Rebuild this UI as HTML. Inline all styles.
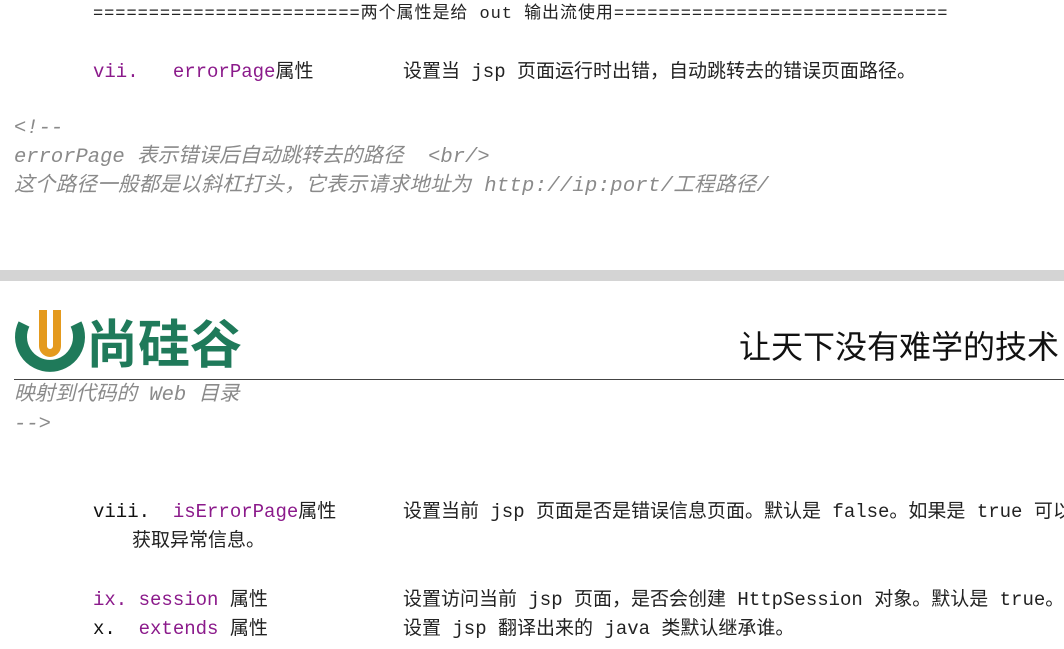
<!DOCTYPE html>
<html><head><meta charset="utf-8"><style>
html,body{margin:0;padding:0;background:#fff;width:1064px;height:649px;overflow:hidden;position:relative}
.l{position:absolute;white-space:pre;font-family:"Liberation Mono","Noto Sans CJK SC",monospace;font-size:19px;line-height:22px;color:#222}
.p{color:#8b1a8b}
.c{color:#8a8a8a;font-style:italic;font-size:20.5px}
.k{color:#111}
</style></head><body>
<div class="l" style="left:93px;top:4px;font-size:17px;letter-spacing:0.95px">========================两个属性是给 out 输出流使用==============================</div>
<div class="l" style="left:93px;top:61px"><span class="p">vii.</span>   <span class="p">errorPage</span>属性</div>
<div class="l" style="left:403px;top:61px">设置当 jsp 页面运行时出错，自动跳转去的错误页面路径。</div>
<div class="l c" style="left:14px;top:118px">&lt;!--</div>
<div class="l c" style="left:14px;top:147px">errorPage 表示错误后自动跳转去的路径  &lt;br/&gt;</div>
<div class="l c" style="left:14px;top:176px;letter-spacing:0.3px">这个路径一般都是以斜杠打头，它表示请求地址为 http://ip:port/工程路径/</div>
<div style="position:absolute;left:0;top:270px;width:1064px;height:11px;background:#d4d4d4"></div>
<svg style="position:absolute;left:14px;top:306px" width="72" height="74" viewBox="0 0 72 74">
<path d="M10 18 A29 29 0 1 0 62 18" fill="none" stroke="#1f7a5a" stroke-width="12"/>
<path d="M25 4 L25 40 A11 11 0 0 0 47 40 L47 4 L39 4 L39 40 A3 3 0 0 1 33 40 L33 4 Z" fill="#e49a1e"/>
</svg>
<div class="l" style="left:86px;top:308px;font-family:'Noto Sans CJK SC',sans-serif;font-size:52px;line-height:66px;color:#1f7a5a;font-weight:bold">尚硅谷</div>
<div class="l" style="left:739px;top:324px;font-family:'Noto Sans CJK SC',sans-serif;font-size:32px;line-height:42px;color:#111">让天下没有难学的技术</div>
<div style="position:absolute;left:14px;top:379px;width:1050px;height:1px;background:#444"></div>
<div class="l c" style="left:14px;top:385px">映射到代码的 Web 目录</div>
<div class="l c" style="left:14px;top:414px">--&gt;</div>
<div class="l" style="left:93px;top:501px"><span class="k">viii.</span>  <span class="p">isErrorPage</span>属性</div>
<div class="l" style="left:403px;top:501px">设置当前 jsp 页面是否是错误信息页面。默认是 false。如果是 true 可以</div>
<div class="l" style="left:132px;top:530px">获取异常信息。</div>
<div class="l" style="left:93px;top:589px"><span class="p">ix. session</span> 属性</div>
<div class="l" style="left:403px;top:589px">设置访问当前 jsp 页面，是否会创建 HttpSession 对象。默认是 true。</div>
<div class="l" style="left:93px;top:618px"><span class="k">x.</span>  <span class="p">extends</span> 属性</div>
<div class="l" style="left:403px;top:618px">设置 jsp 翻译出来的 java 类默认继承谁。</div>
</body></html>
